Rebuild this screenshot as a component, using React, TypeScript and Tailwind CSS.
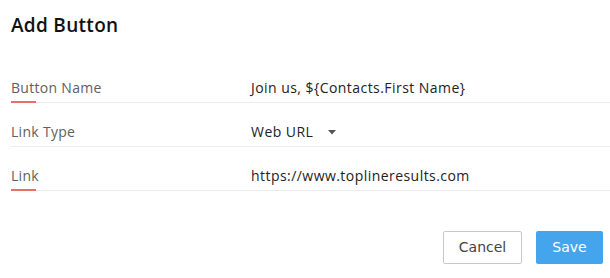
import React from "react";

function Row({ label, marked, children }: { label: string; marked?: boolean; children: React.ReactNode }) {
  return (
    <div className="flex h-[44px] items-end border-b border-[#ebebeb] pb-[4px]">
      <div className="relative w-[240px] self-stretch flex items-end">
        <span className="text-[14px] leading-[20px] tracking-[0.3px] text-[#606060]">{label}</span>
        {marked && <div className="absolute bottom-[-5px] left-0 h-[2px] w-[25px] bg-[#e8706b]" />}
      </div>
      <div className="flex items-center text-[14px] leading-[20px] tracking-[0.45px] text-[#222]">{children}</div>
    </div>
  );
}

export default function App() {
  return (
    <div className="h-[278px] w-[610px] bg-white" style={{ fontFamily: "'Open Sans', Lato, sans-serif" }}>
      <div className="pl-[11px] pt-[13px]">
        <h1 className="text-[19px] leading-[24px] tracking-[0.3px] font-semibold text-[#111]">Add Button</h1>
        <div className="mt-[22px]">
          <Row label="Button Name" marked>
            Join us, ${"{"}Contacts.First Name{"}"}
          </Row>
          <Row label="Link Type">
            <span>Web URL</span>
            <svg className="ml-[15px]" width="8" height="5" viewBox="0 0 8 5">
              <path d="M0 0 L8 0 L4 4.5 Z" fill="#555" />
            </svg>
          </Row>
          <Row label="Link" marked>
            https://www.toplineresults.com
          </Row>
        </div>
      </div>
      <div className="mt-[40px] flex justify-end gap-[14px] pr-[7px]" style={{ fontFamily: "'DejaVu Sans', Verdana, sans-serif" }}>
        <button className="h-[33px] w-[79px] rounded-[2px] border border-[#c8c8c8] bg-white text-[14px] text-[#444]">Cancel</button>
        <button className="h-[33px] w-[67px] rounded-[2px] bg-[#44a5ec] text-[14px] text-white">Save</button>
      </div>
    </div>
  );
}
